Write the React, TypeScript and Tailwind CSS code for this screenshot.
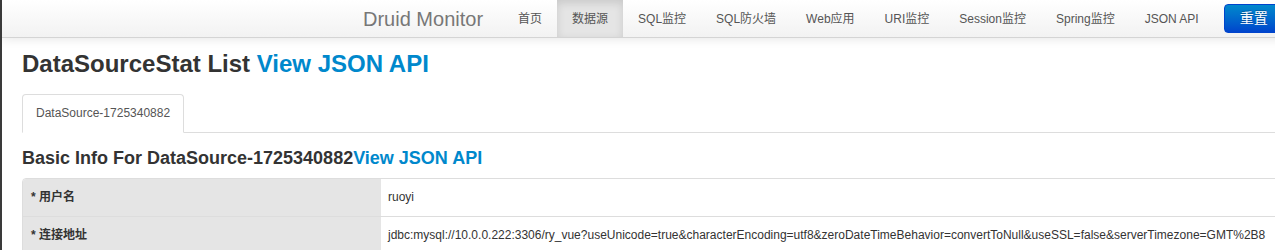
const navItems = [
  "首页",
  "数据源",
  "SQL监控",
  "SQL防火墙",
  "Web应用",
  "URI监控",
  "Session监控",
  "Spring监控",
  "JSON API",
];

const rows = [
  { label: "* 用户名", value: "ruoyi" },
  {
    label: "* 连接地址",
    value:
      "jdbc:mysql://10.0.0.222:3306/ry_vue?useUnicode=true&characterEncoding=utf8&zeroDateTimeBehavior=convertToNull&useSSL=false&serverTimezone=GMT%2B8",
  },
];

const font = {
  fontFamily: '"Liberation Sans", "Noto Sans CJK SC", sans-serif',
};

export default function App() {
  return (
    <div
      className="w-[1275px] h-[250px] overflow-hidden bg-white border-l-2 border-[#3a3a3a] text-[#333]"
      style={font}
    >
      {/* Navbar */}
      <div className="h-[38px] w-[1400px] flex items-stretch bg-gradient-to-b from-white to-[#f2f2f2] border-b border-[#d4d4d4] shadow-[0_1px_10px_rgba(0,0,0,0.1)] relative">
        <div className="ml-[341px] px-[20px] flex items-center text-[20px] text-[#777] leading-none">
          Druid Monitor
        </div>
        <ul className="flex items-stretch">
          {navItems.map((item, i) => (
            <li
              key={item}
              className={
                i === 1
                  ? "flex items-center px-[15px] text-[12px] text-[#555] bg-[#e5e5e5] shadow-[inset_0_3px_8px_rgba(0,0,0,0.125)]"
                  : "flex items-center px-[15px] text-[12px] text-[#555]"
              }
            >
              {item}
            </li>
          ))}
        </ul>
        <div className="ml-[10px] flex items-center">
          <button className="h-[29px] px-[15px] text-[14px] text-white rounded-[4px] border border-[#0044cc] bg-gradient-to-b from-[#0088cc] to-[#0044cc] [text-shadow:0_-1px_0_rgba(0,0,0,0.25)]">
            重置
          </button>
        </div>
      </div>

      {/* Content */}
      <div className="pl-[20px]">
        <h3 className="mt-[6px] text-[24px] leading-[40px] font-bold text-[#333]">
          DataSourceStat List{" "}
          <a className="text-[#0088cc]">View JSON API</a>
        </h3>

        <ul className="mt-[10px] flex border-b border-[#ddd]">
          <li className="-mb-px px-[13px] pt-[8px] pb-[9px] text-[12px] leading-[20px] text-[#555] bg-white border border-[#ddd] border-b-transparent rounded-t-[4px]">
            DataSource-1725340882
          </li>
        </ul>

        <h4 className="mt-[15px] text-[18px] leading-[20px] font-bold text-[#333]">
          Basic Info For DataSource-1725340882
          <a className="text-[#0088cc]">View JSON API</a>
        </h4>

        <div className="mt-[10px] w-[1270px] border border-[#ddd] rounded-t-[4px] overflow-hidden">
          {rows.map((row, i) => (
            <div
              key={row.label}
              className={
                i === 0
                  ? "flex text-[12px] leading-[21px]"
                  : "flex text-[12px] leading-[21px] border-t border-[#ddd]"
              }
            >
              <div className="w-[358px] shrink-0 bg-[#e5e5e5] px-[8px] py-[8px] font-bold">
                {row.label}
              </div>
              <div className="flex-1 px-[7px] py-[8px] whitespace-nowrap">
                {row.value}
              </div>
            </div>
          ))}
        </div>
      </div>
    </div>
  );
}
